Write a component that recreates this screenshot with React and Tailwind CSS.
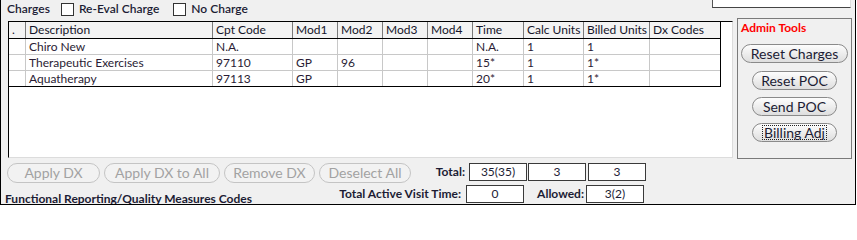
import React from "react";

const cols = [
  { w: "w-[17px]", h: "." },
  { w: "w-[187px]", h: "Description" },
  { w: "w-[80px]", h: "Cpt Code" },
  { w: "w-[45px]", h: "Mod1" },
  { w: "w-[45px]", h: "Mod2" },
  { w: "w-[45px]", h: "Mod3" },
  { w: "w-[45px]", h: "Mod4" },
  { w: "w-[51px]", h: "Time" },
  { w: "w-[60px]", h: "Calc Units" },
  { w: "w-[66px]", h: "Billed Units" },
  { w: "w-[71px]", h: "Dx Codes" },
];

const rows = [
  ["", "Chiro New", "N.A.", "", "", "", "", "N.A.", "1", "1", ""],
  ["", "Therapeutic Exercises", "97110", "GP", "96", "", "", "15*", "1", "1*", ""],
  ["", "Aquatherapy", "97113", "GP", "", "", "", "20*", "1", "1*", ""],
];

function Check() {
  return <span className="inline-block w-[13px] h-[13px] bg-white border border-[#333333]" />;
}

function AdminBtn({ children, w, focus }) {
  return (
    <div
      className={`${w} h-[19px] rounded-full border border-[#8a8a8a] bg-gradient-to-b from-[#fdfdfd] to-[#dedede] flex items-center justify-center text-[14px] leading-none text-[#1c1c34]`}
    >
      {focus ? (
        <span className="border border-dotted border-[#222222] px-[1px] h-[15px] flex items-center">{children}</span>
      ) : (
        children
      )}
    </div>
  );
}

function DisBtn({ children, w }) {
  return (
    <div
      className={`${w} h-[20px] rounded-full border border-[#c4c4c4] bg-[#f2f2f2] flex items-center justify-center text-[14px] leading-none text-[#a2a2a2]`}
    >
      {children}
    </div>
  );
}

function Box({ children }) {
  return (
    <div className="w-[58px] h-[18px] bg-white border border-[#3a3a3a] flex items-center justify-center text-[12px] leading-none text-[#1c1c34]">
      {children}
    </div>
  );
}

export default function App() {
  return (
    <div className="w-[857px] h-[206px] bg-white" style={{ fontFamily: "Lato, 'Noto Sans', sans-serif" }}>
      <div className="w-[856px] h-[205px] bg-[#f0f0f0] border-l border-r border-b border-black flex flex-col overflow-hidden">
        {/* top row */}
        <div className="h-[18px] flex items-start">
          <div className="flex items-center h-[18px] pl-[6px] text-[12px] text-[#1c1c34]">
            <span className="font-semibold">Charges</span>
            <span className="ml-[11px] flex items-center"><Check /></span>
            <span className="ml-[5px] font-semibold">Re-Eval Charge</span>
            <span className="ml-[14px] flex items-center"><Check /></span>
            <span className="ml-[5px] font-semibold">No Charge</span>
          </div>
          <div className="ml-auto mr-[4px] w-[139px] h-[8px] bg-white border-l border-r border-b border-l-[#555555] border-r-[#dddddd] border-b-[#444444]" />
        </div>

        {/* middle row */}
        <div className="flex items-start">
          <div className="ml-[7px] mt-[3px] w-[725px] h-[137px] bg-white border-l border-t border-black border-r border-b border-r-[#dcdcdc] border-b-[#dcdcdc]">
            <div className="w-[712px] border-r border-black text-[12px] leading-none">
              <div className="flex h-[17px] bg-[#f3f3f3] border-b border-black text-[#15152a]">
                {cols.map((c, i) => (
                  <div
                    key={i}
                    className={`${c.w} shrink-0 flex items-center pl-[3px] whitespace-nowrap ${i < cols.length - 1 ? "border-r border-[#7a7a7a]" : ""}`}
                  >
                    {c.h}
                  </div>
                ))}
              </div>
              {rows.map((r, ri) => (
                <div
                  key={ri}
                  className={`flex h-[16px] border-b ${ri === rows.length - 1 ? "border-black" : "border-[#c8c8c8]"} text-[#2a1c34]`}
                >
                  {r.map((v, i) => (
                    <div
                      key={i}
                      className={`${cols[i].w} shrink-0 flex items-center pl-[3px] whitespace-nowrap ${i < cols.length - 1 ? "border-r border-[#c8c8c8]" : ""}`}
                    >
                      {v}
                    </div>
                  ))}
                </div>
              ))}
            </div>
          </div>

          <div className="ml-[4px] w-[115px] h-[141px] border border-[#7a7a7a] flex flex-col items-center">
            <div className="self-start pl-[3px] pt-[1px] h-[17px] text-[12px] font-bold text-[#ff0000] flex items-center">Admin Tools</div>
            <div className="mt-[8px]"><AdminBtn w="w-[107px]">Reset Charges</AdminBtn></div>
            <div className="mt-[8px]"><AdminBtn w="w-[85px]">Reset POC</AdminBtn></div>
            <div className="mt-[7px]"><AdminBtn w="w-[85px]">Send POC</AdminBtn></div>
            <div className="mt-[7px]"><AdminBtn w="w-[85px]" focus>Billing Adj</AdminBtn></div>
          </div>
        </div>

        {/* bottom row A */}
        <div className="flex items-start mt-[4px]">
          <div className="flex gap-[4px] pl-[6px]">
            <DisBtn w="w-[93px]">Apply DX</DisBtn>
            <DisBtn w="w-[116px]">Apply DX to All</DisBtn>
            <DisBtn w="w-[91px]">Remove DX</DisBtn>
            <DisBtn w="w-[92px]">Deselect All</DisBtn>
          </div>
          <div className="w-[54px] h-[18px] flex items-center justify-end text-[12px] font-bold text-[#1c1c34]">Total:</div>
          <div className="ml-[4px] flex">
            <Box>35(35)</Box>
            <div className="ml-[1px]"><Box>3</Box></div>
            <div className="ml-[2px]"><Box>3</Box></div>
          </div>
        </div>

        {/* bottom row B */}
        <div className="flex items-start mt-[2px]">
          <div className="w-[460px] flex justify-between items-start">
            <div className="pl-[4px] pt-[6px] text-[12px] font-bold text-[#1c1c34] leading-[16px] whitespace-nowrap">
              Functional Reporting/Quality Measures Codes
            </div>
            <div className="h-[18px] flex items-center text-[12px] font-bold text-[#1c1c34] whitespace-nowrap">Total Active Visit Time:</div>
          </div>
          <div className="ml-[5px]"><Box>0</Box></div>
          <div className="w-[60px] h-[18px] flex items-center justify-end text-[12px] font-bold text-[#1c1c34]">Allowed:</div>
          <div className="ml-[2px]"><Box>3(2)</Box></div>
        </div>
      </div>
    </div>
  );
}
